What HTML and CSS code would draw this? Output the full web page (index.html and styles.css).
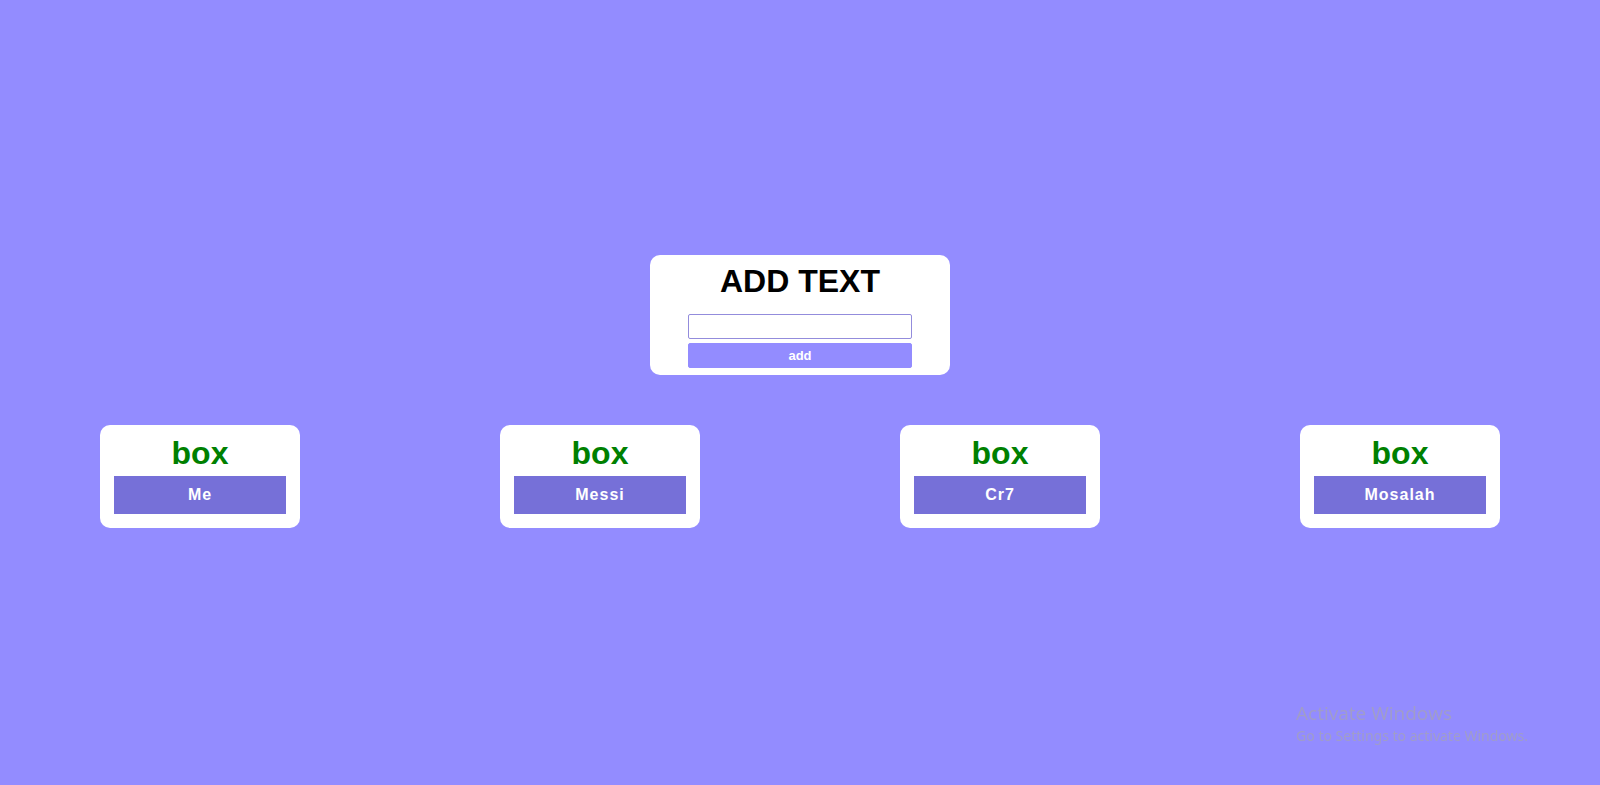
FILE: index.html
```html
<!DOCTYPE html>
<html lang="en">
<head>
<meta charset="utf-8">
<meta name="viewport" content="width=device-width, initial-scale=1">
<title>Add text</title>
<link rel="stylesheet" href="styles.css">
</head>
<body>
<main class="page">
  <form class="add-card">
    <h1 class="add-title"><label for="text">ADD TEXT</label></h1>
    <input class="field" id="text" type="text">
    <button class="field add-button" type="button">add</button>
  </form>
  <section class="boxes">
    <article class="box"><h2 class="box-title">box</h2><p class="box-label">Me</p></article>
    <article class="box"><h2 class="box-title">box</h2><p class="box-label">Messi</p></article>
    <article class="box"><h2 class="box-title">box</h2><p class="box-label">Cr7</p></article>
    <article class="box"><h2 class="box-title">box</h2><p class="box-label">Mosalah</p></article>
  </section>
</main>
<aside class="notice">
  <p class="notice-title">Activate Windows</p>
  <p class="notice-text">Go to Settings to activate Windows.</p>
</aside>
</body>
</html>
```
FILE: styles.css
```css
* {
  box-sizing: border-box;
  margin: 0;
  padding: 0;
}

body {
  background: #938cff;
  font-family: "Liberation Sans", Arial, sans-serif;
}

.page {
  min-height: 100vh;
  padding-bottom: 2px;
  display: flex;
  flex-direction: column;
  align-items: center;
  justify-content: center;
  gap: 50px;
}

.add-card {
  width: 300px;
  padding: 8px 38px 7px;
  display: flex;
  flex-direction: column;
  gap: 4px;
  background: #fff;
  border-radius: 10px;
}

.add-title {
  margin-bottom: 11px;
  font-size: 32px;
  line-height: 36px;
  text-align: center;
  white-space: nowrap;
}

.field {
  width: 100%;
  height: 25px;
  padding: 0 4px;
  border: 1px solid #938cdc;
  border-radius: 2px;
  background: #fff;
  font: bold 13px "Liberation Sans", Arial, sans-serif;
}

.add-button {
  border-color: #938cff;
  background: #938cff;
  color: #fff;
}

.boxes {
  width: 100%;
  display: flex;
  justify-content: space-around;
}

.box {
  width: 200px;
  padding: 10px 14px 14px;
  background: #fff;
  border-radius: 10px;
  text-align: center;
}

.box-title {
  margin-bottom: 5px;
  color: green;
  font-size: 32px;
  line-height: 36px;
}

.box-label {
  padding: 10px;
  background: #7670d8;
  color: #fff;
  font-size: 16px;
  font-weight: bold;
  line-height: 18px;
  letter-spacing: 1px;
}

.notice {
  position: fixed;
  right: 72px;
  bottom: 39px;
  color: #a09dc8;
}

.notice-title {
  font-family: "Open Sans", sans-serif;
  font-size: 19px;
  line-height: 26px;
}

.notice-text {
  font-family: "Noto Sans", sans-serif;
  font-size: 14px;
  line-height: 20px;
}
```
